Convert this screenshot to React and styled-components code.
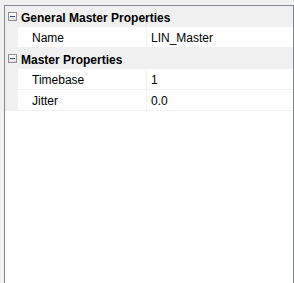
import React from "react";
import styled, { createGlobalStyle } from "styled-components";

const GlobalStyle = createGlobalStyle`
    html, body {
        margin: 0;
        padding: 0;
        background: #f0f0f0;
        height: 100%;
        overflow: hidden;
    }
    #root {
        height: 100%;
    }
`;

const Page = styled.div`
    height: 100%;
    padding: 5px 0 0 4px;
    box-sizing: border-box;
    font-family: "Liberation Sans", Arial, sans-serif;
    font-size: 12px;
    color: #000;
`;

const Grid = styled.div`
    width: 290px;
    height: 100%;
    box-sizing: border-box;
    background: #fff;
    border: 1px solid #828790;
    border-bottom: none;
`;

const GroupHeader = styled.div`
    display: flex;
    align-items: center;
    height: 21px;
    background: #f0f0f0;
    padding-left: 3px;
    font-weight: bold;
`;

const GroupTitle = styled.span`
    margin-top: 2px;
`;

const ToggleBox = styled.span`
    width: 9px;
    height: 9px;
    box-sizing: border-box;
    border: 1px solid #919191;
    background: linear-gradient(#ffffff, #e4e4e4);
    margin-right: 4px;
    display: flex;
    align-items: center;
    justify-content: center;

    &::before {
        content: "";
        width: 5px;
        height: 1px;
        background: #2b4f8c;
    }
`;

const Row = styled.div`
    display: grid;
    grid-template-columns: 13px 129px 1fr;
    height: 21px;
`;

const Gutter = styled.div`
    background: #f0f0f0;
`;

const Cell = styled.div`
    display: flex;
    align-items: center;
    padding-top: 2px;
    padding-left: ${(p) => p.$indent}px;
    border-bottom: 1px solid #f0f0f0;
    border-right: ${(p) => (p.$divider ? "1px solid #f0f0f0" : "none")};
    white-space: nowrap;
    overflow: hidden;
`;

const groups = [
    {
        title: "General Master Properties",
        rows: [["Name", "LIN_Master"]],
    },
    {
        title: "Master Properties",
        rows: [
            ["Timebase", "1"],
            ["Jitter", "0.0"],
        ],
    },
];

export default function App() {
    return (
        <Page>
            <GlobalStyle />
            <Grid>
                {groups.map((g) => (
                    <React.Fragment key={g.title}>
                        <GroupHeader>
                            <ToggleBox />
                            <GroupTitle>{g.title}</GroupTitle>
                        </GroupHeader>
                        {g.rows.map(([name, value]) => (
                            <Row key={name}>
                                <Gutter />
                                <Cell $indent={14} $divider>{name}</Cell>
                                <Cell $indent={4}>{value}</Cell>
                            </Row>
                        ))}
                    </React.Fragment>
                ))}
            </Grid>
        </Page>
    );
}
